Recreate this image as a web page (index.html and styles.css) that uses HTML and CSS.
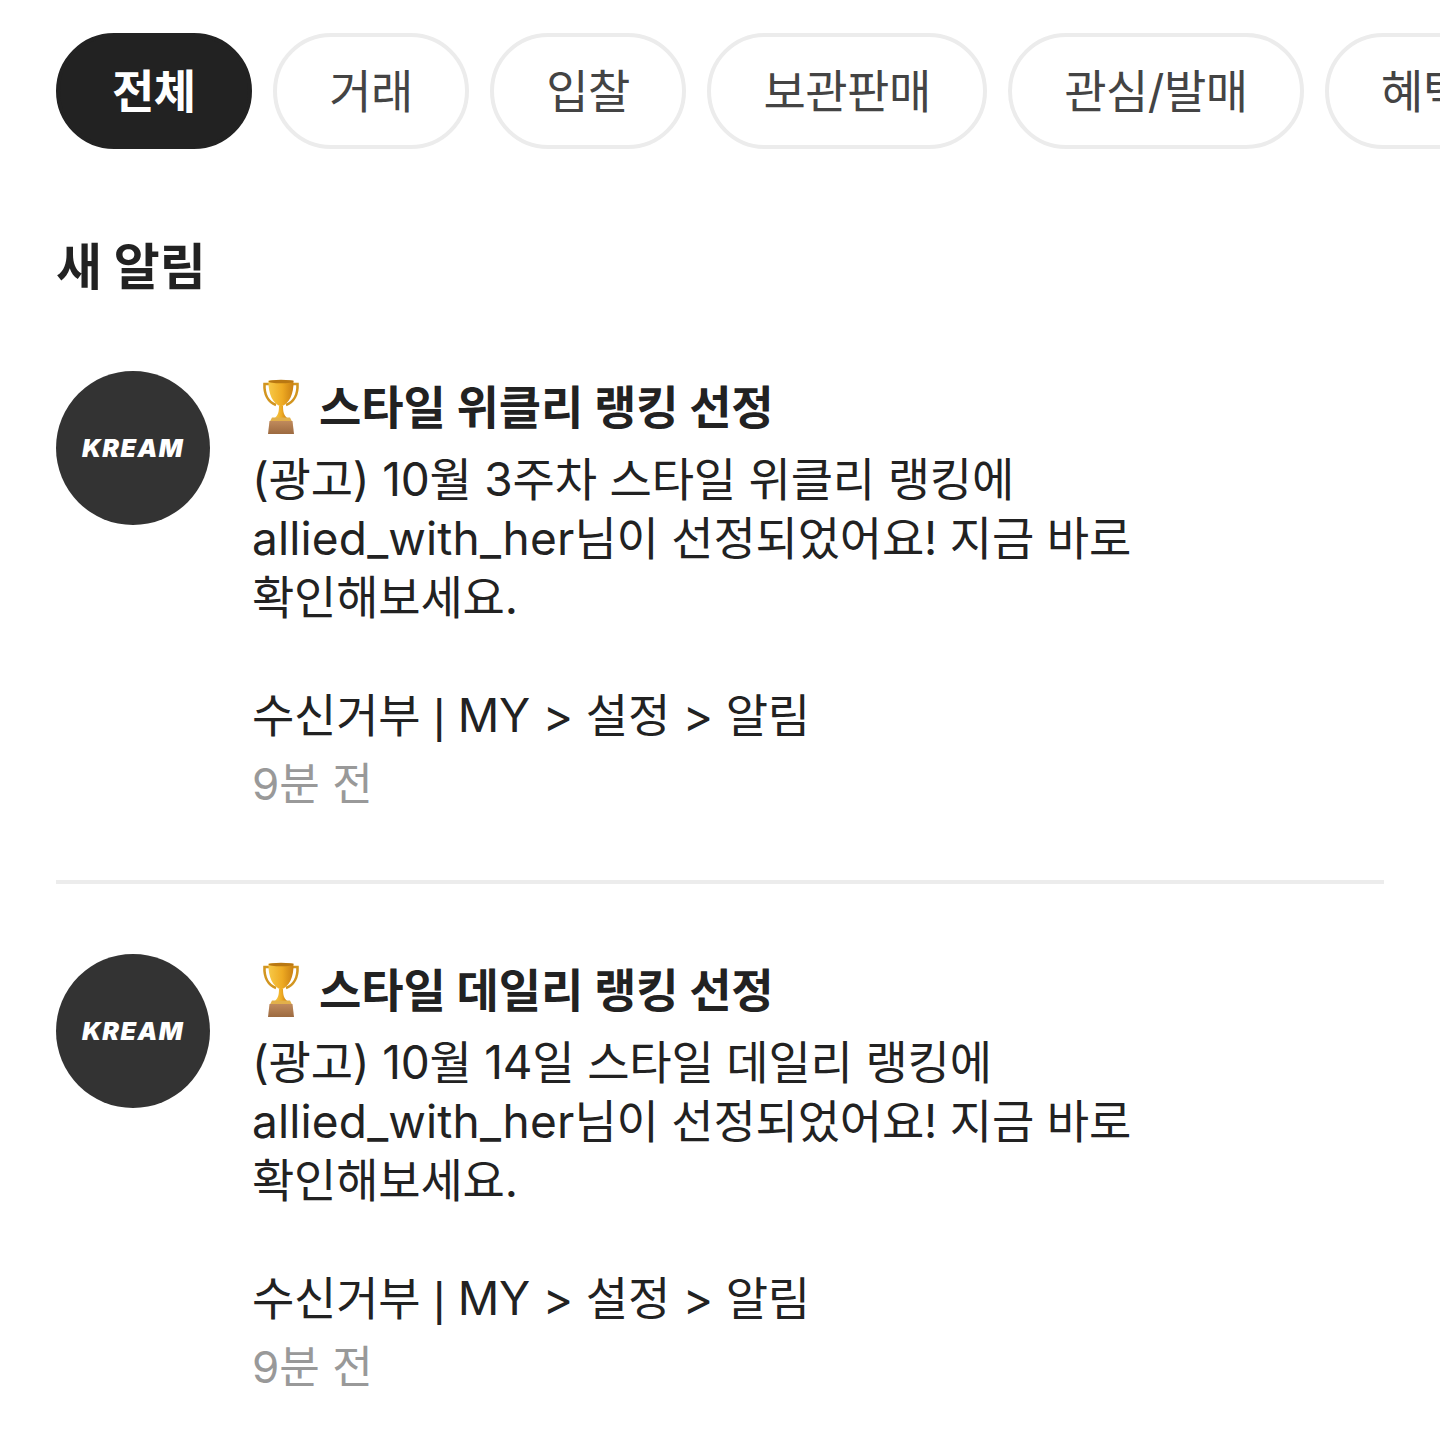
FILE: index.html
```html
<!DOCTYPE html>
<html lang="ko">

<head>
  <meta charset="UTF-8">
  <meta name="viewport" content="width=device-width, initial-scale=1.0">
  <title>알림</title>
  <link rel="stylesheet" href="styles.css">
</head>

<body>
  <svg class="defs" width="0" height="0">
    <defs>
      <linearGradient id="gold" x1="0" y1="0" x2="1" y2="0">
        <stop offset="0" stop-color="#f7c948"/>
        <stop offset="0.55" stop-color="#eeaa22"/>
        <stop offset="1" stop-color="#c97f12"/>
      </linearGradient>
      <linearGradient id="wood" x1="0" y1="0" x2="0" y2="1">
        <stop offset="0" stop-color="#c08a5c"/>
        <stop offset="1" stop-color="#9c6a40"/>
      </linearGradient>
      <symbol id="trophy" viewBox="0 0 38 56">
        <path d="M9 5H2.500C2 15 6 23 14 26M29 5h6.500C36 15 32 23 24 26" fill="none" stroke="#d2951f" stroke-width="2.600"/>
        <path d="M6.500 1.500h25C32 15 27 25 19 27.500 11 25 6 15 6.500 1.500z" fill="url(#gold)"/>
        <ellipse cx="19" cy="2.500" rx="12.500" ry="1.800" fill="#b97812"/>
        <path d="M17 27h4c0 6 1 9 4 12H13c3-3 4-6 4-12z" fill="url(#gold)"/>
        <path d="M10 38.500h18l2 4H8z" fill="#e2b04a"/>
        <path d="M7.500 42h23l1.500 13H6z" fill="url(#wood)"/>
      </symbol>
    </defs>
  </svg>

  <ul class="tabs">
    <li class="active">전체</li>
    <li>거래</li>
    <li>입찰</li>
    <li>보관판매</li>
    <li>관심/발매</li>
    <li>혜택</li>
  </ul>

  <h2 class="section-title">새 알림</h2>

  <div class="notice">
    <div class="avatar"><span>KREAM</span></div>
    <div class="notice-body">
      <h3 class="notice-title">
        <svg class="trophy" width="38" height="56"><use href="#trophy"/></svg>
        스타일 위클리 랭킹 선정
      </h3>
      <p class="notice-text">(광고) 10월 3주차 스타일 위클리 랭킹에<br><span class="nick">allied_with_her</span>님이 선정되었어요! 지금 바로<br>확인해보세요.</p>
      <p class="notice-text optout">수신거부 <span class="bar">|</span> MY &gt; 설정 &gt; 알림</p>
      <p class="notice-time">9분 전</p>
    </div>
  </div>

  <div class="divider"></div>

  <div class="notice">
    <div class="avatar"><span>KREAM</span></div>
    <div class="notice-body">
      <h3 class="notice-title">
        <svg class="trophy" width="38" height="56"><use href="#trophy"/></svg>
        스타일 데일리 랭킹 선정
      </h3>
      <p class="notice-text">(광고) 10월 14일 스타일 데일리 랭킹에<br><span class="nick">allied_with_her</span>님이 선정되었어요! 지금 바로<br>확인해보세요.</p>
      <p class="notice-text optout">수신거부 <span class="bar">|</span> MY &gt; 설정 &gt; 알림</p>
      <p class="notice-time">9분 전</p>
    </div>
  </div>
</body>

</html>
```

FILE: styles.css
```css
* {
  margin: 0;
  padding: 0;
  box-sizing: border-box;
}

li {
  list-style: none;
}

body {
  width: 1440px;
  height: 1440px;
  overflow: hidden;
  background: #ffffff;
  color: #222222;
  font-family: Inter, "Noto Sans CJK KR", sans-serif;
}

.defs {
  display: block;
  height: 0;
}

.tabs {
  display: flex;
  gap: 21.5px;
  padding: 33px 0 0 56px;
  width: 1440px;
  overflow: hidden;
}

.tabs>li {
  flex: none;
  height: 116px;
  line-height: 108px;
  padding: 0 52px;
  border: 4px solid #ececec;
  border-radius: 58px;
  font-size: 46px;
  letter-spacing: -0.5px;
  color: #444444;
  text-align: center;
}

.tabs>li.active {
  background: #222222;
  border-color: #222222;
  color: #ffffff;
  font-weight: 700;
}

.section-title {
  margin: 88px 0 74px 56px;
  font-size: 50px;
  line-height: 60px;
  font-weight: 700;
}

.notice {
  display: flex;
  gap: 42px;
  padding: 0 56px;
}

.avatar {
  flex: none;
  width: 154px;
  height: 154px;
  border-radius: 50%;
  background: #333333;
  color: #ffffff;
  display: flex;
  align-items: center;
  justify-content: center;
}

.avatar>span {
  font-size: 25px;
  font-weight: 900;
  font-style: italic;
  letter-spacing: 1.4px;
}

.notice-title {
  display: flex;
  align-items: center;
  gap: 19px;
  padding-left: 10px;
  font-size: 46px;
  letter-spacing: -0.1px;
  line-height: 72px;
  font-weight: 700;
  margin-bottom: 7px;
}

.trophy {
  flex: none;
}

.notice-text {
  font-size: 46px;
  letter-spacing: -0.2px;
  line-height: 59px;
  color: #222222;
}

.nick {
  letter-spacing: 0.15px;
}

.optout {
  margin-top: 59px;
}

.bar {
  font-family: "Liberation Sans", sans-serif;
}

.notice-time {
  margin-top: 3px;
  font-size: 44px;
  line-height: 70px;
  color: #999999;
}

.divider {
  height: 4px;
  margin: 61px 56px 70px;
  background: #ececec;
}
```
